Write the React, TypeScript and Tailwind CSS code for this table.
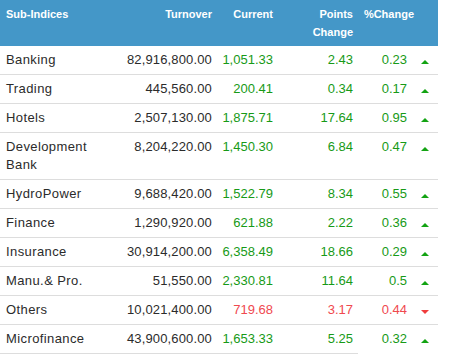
import React from 'react';

type Row = {
  name: string;
  turnover: string;
  current: string;
  points: string;
  pct: string;
  up: boolean;
};

const rows: Row[] = [
  { name: 'Banking', turnover: '82,916,800.00', current: '1,051.33', points: '2.43', pct: '0.23', up: true },
  { name: 'Trading', turnover: '445,560.00', current: '200.41', points: '0.34', pct: '0.17', up: true },
  { name: 'Hotels', turnover: '2,507,130.00', current: '1,875.71', points: '17.64', pct: '0.95', up: true },
  { name: 'Development Bank', turnover: '8,204,220.00', current: '1,450.30', points: '6.84', pct: '0.47', up: true },
  { name: 'HydroPower', turnover: '9,688,420.00', current: '1,522.79', points: '8.34', pct: '0.55', up: true },
  { name: 'Finance', turnover: '1,290,920.00', current: '621.88', points: '2.22', pct: '0.36', up: true },
  { name: 'Insurance', turnover: '30,914,200.00', current: '6,358.49', points: '18.66', pct: '0.29', up: true },
  { name: 'Manu.& Pro.', turnover: '51,550.00', current: '2,330.81', points: '11.64', pct: '0.5', up: true },
  { name: 'Others', turnover: '10,021,400.00', current: '719.68', points: '3.17', pct: '0.44', up: false },
  { name: 'Microfinance', turnover: '43,900,600.00', current: '1,653.33', points: '5.25', pct: '0.32', up: true },
];

const Arrow = ({ up }: { up: boolean }) =>
  up ? (
    <span className="inline-block h-0 w-0 border-x-[4px] border-b-[4px] border-x-transparent border-b-[#13a313]" />
  ) : (
    <span className="inline-block h-0 w-0 border-x-[4px] border-t-[4px] border-x-transparent border-t-[#f03c3c]" />
  );

export default function App() {
  return (
    <div className="w-[450px] h-[355px] overflow-hidden bg-white font-[family-name:'Liberation_Sans',Arial,sans-serif]">
      <table className="w-[438px] table-fixed border-collapse">
        <colgroup>
          <col className="w-[120px]" />
          <col className="w-[97px]" />
          <col className="w-[61px]" />
          <col className="w-[80px]" />
          <col className="w-[58px]" />
          <col className="w-[22px]" />
        </colgroup>
        <thead>
          <tr className="bg-[#4497c8] text-[11px] font-bold leading-[18px] text-white">
            <th className="py-[5px] pl-[6px] text-left align-top">Sub-Indices</th>
            <th className="py-[5px] pr-[5px] text-right align-top">Turnover</th>
            <th className="py-[5px] pr-[5px] text-right align-top">Current</th>
            <th className="py-[5px] pr-[5px] text-right align-top">
              Points
              <br />
              Change
            </th>
            <th className="py-[5px] pr-[2px] text-right align-top whitespace-nowrap">%Change</th>
            <th />
          </tr>
        </thead>
        <tbody className="text-[13px] leading-[18px]">
          {rows.map((r, i) => {
            const tone = r.up ? 'text-[#179a17]' : 'text-[#f0494f]';
            const last = i === rows.length - 1;
            return (
              <tr key={r.name} className={last ? '' : 'border-b border-[#dddddd]'}>
                <td className="py-[5px] pl-[6px] pr-[8px] align-top tracking-[0.4px] text-[#2b2b2b]">{r.name}</td>
                <td className="py-[5px] pr-[5px] text-right align-top tracking-[0.15px] text-[#2b2b2b]">{r.turnover}</td>
                <td className={`py-[5px] pr-[5px] text-right align-top ${tone}`}>{r.current}</td>
                <td className={`py-[5px] pr-[5px] text-right align-top ${tone}`}>{r.points}</td>
                <td className={`py-[5px] pr-[9px] text-right align-top ${tone}`}>{r.pct}</td>
                <td className="py-[5px] pr-[5px] text-center align-top">
                  <span className="flex h-[18px] items-center justify-center pt-[3px]">
                    <Arrow up={r.up} />
                  </span>
                </td>
              </tr>
            );
          })}
        </tbody>
      </table>
      <div className="h-px w-[358px] bg-[#dddddd]" />
    </div>
  );
}
